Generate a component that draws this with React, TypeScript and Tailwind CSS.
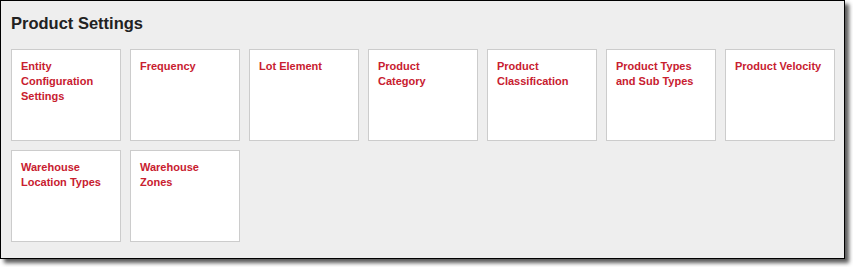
import React from "react";

const items: string[][] = [
  ["Entity", "Configuration", "Settings"],
  ["Frequency"],
  ["Lot Element"],
  ["Product", "Category"],
  ["Product", "Classification"],
  ["Product Types", "and Sub Types"],
  ["Product Velocity"],
  ["Warehouse", "Location Types"],
  ["Warehouse", "Zones"],
];

export default function App() {
  return (
    <div className="w-[853px] h-[267px] bg-white" style={{ fontFamily: '"Liberation Sans", Arial, sans-serif' }}>
      <div className="w-[845px] h-[259px] border border-black bg-[#eeeeee] shadow-[4px_4px_4px_rgba(0,0,0,0.65)] pt-[12px] px-[10px]">
        <h1 className="text-[16.5px] leading-[20px] font-bold text-[#222222]">Product Settings</h1>
        <div className="mt-[16px] grid grid-cols-[repeat(7,110px)] gap-[9px]">
          {items.map((lines, i) => (
            <div key={i} className="h-[92px] border border-[#cccccc] bg-white pt-[9px] px-[9px]">
              <div className="text-[11px] leading-[15px] font-bold text-[#c8202f]">
                {lines.map((l, j) => (
                  <div key={j} className="whitespace-nowrap">{l}</div>
                ))}
              </div>
            </div>
          ))}
        </div>
      </div>
    </div>
  );
}
